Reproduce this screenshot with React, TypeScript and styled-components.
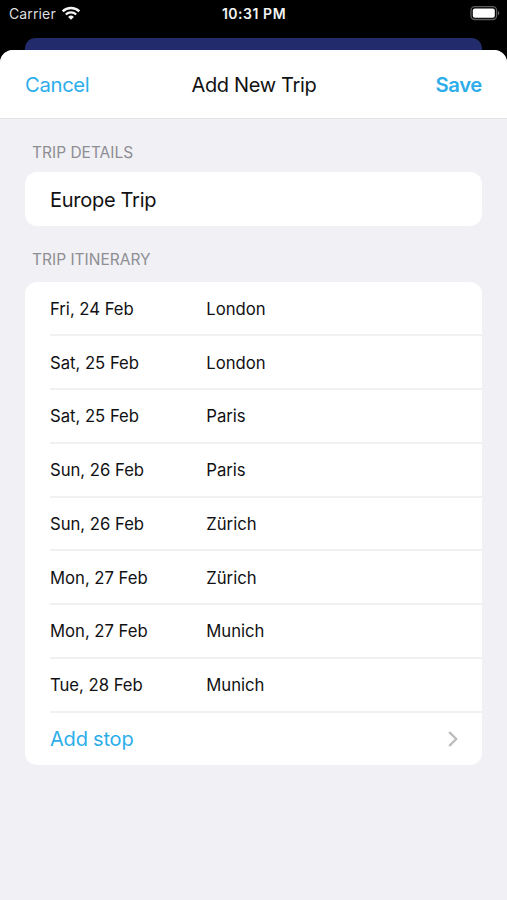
import React from "react";
import styled, { createGlobalStyle } from "styled-components";

const GlobalStyle = createGlobalStyle`
  *, *::before, *::after { box-sizing: border-box; }
  body { margin: 0; background: #000; }
`;

const Screen = styled.div`
  width: 507px;
  height: 900px;
  display: flex;
  flex-direction: column;
  overflow: hidden;
  background: #000;
  color: #111113;
  font-family: Inter, "Liberation Sans", sans-serif;
`;

const StatusBar = styled.header`
  height: 38px;
  flex: none;
  display: grid;
  grid-template-columns: 1fr auto 1fr;
  align-items: start;
  padding: 4px 6px 0 9px;
  color: #f4f4f4;
  font-size: 14px;
  line-height: 20px;
`;

const CarrierGroup = styled.div`
  display: flex;
  gap: 5px;
  letter-spacing: 0.13px;
  color: #dedede;
`;

const WifiIcon = styled.svg`
  width: 20px;
  height: 16px;
  margin-top: 1px;
`;

const Clock = styled.time`
  font-weight: 600;
  font-size: 14px;
  letter-spacing: 0.54px;
  margin-right: 2px;
`;

const BatteryIcon = styled.svg`
  justify-self: end;
  width: 32px;
  height: 16px;
  margin-top: 1px;
`;

const PreviousSheet = styled.div`
  height: 12px;
  flex: none;
  margin: 0 25px;
  background: #222c6c;
  border-radius: 10px 10px 0 0;
`;

const Sheet = styled.main`
  flex: 1;
  background: #f0f0f5;
  border-radius: 13px 13px 0 0;
  overflow: hidden;
`;

const NavBar = styled.nav`
  height: 69px;
  display: grid;
  grid-template-columns: 1fr auto 1fr;
  align-items: center;
  padding: 0 25px;
  background: #fff;
  border-bottom: 1px solid #e3e3e5;
`;

const Title = styled.h1`
  margin: 0 0 0 1px;
  padding-top: 2px;
  font-size: 20px;
  font-weight: 400;
  letter-spacing: -0.33px;
`;

const NavButton = styled.button<{ $primary?: boolean }>`
  justify-self: ${({ $primary }) => ($primary ? "end" : "start")};
  border: 0;
  padding: 0;
  background: none;
  font-family: inherit;
  font-size: 20.3px;
  font-weight: ${({ $primary }) => ($primary ? 600 : 400)};
  letter-spacing: -0.35px;
  color: #2daeea;
`;

const Content = styled.div`
  padding: 0 25px;
`;

const SectionTitle = styled.h2<{ $first?: boolean }>`
  margin: 0;
  height: ${({ $first }) => ($first ? 53 : 55.5)}px;
  padding: 24px 0 0 7px;
  font-size: 15.5px;
  line-height: 20px;
  font-weight: 400;
  letter-spacing: 0;
  color: #8e8e93;
`;

const Card = styled.section`
  background: #fff;
  border-radius: 12px;
  overflow: hidden;
`;

const NameField = styled.div`
  height: 54px;
  display: flex;
  align-items: center;
  padding: 1px 25px 0;
  font-size: 20px;
  letter-spacing: -0.28px;
`;

const StopRow = styled.div`
  height: 53.75px;
  margin-left: 25px;
  display: grid;
  grid-template-columns: 156.3px 1fr;
  align-items: center;
  padding-top: 1px;
  font-size: 16.7px;
  letter-spacing: -0.02px;
  box-shadow: inset 0 -1px 0 #f1f1f3, 0 1px 0 #f1f1f3;
`;

const AddStopButton = styled.button`
  width: 100%;
  height: 53.75px;
  display: flex;
  justify-content: space-between;
  align-items: center;
  border: 0;
  padding: 1px 24px 0 25px;
  background: none;
  font-family: inherit;
  font-size: 20px;
  letter-spacing: -0.2px;
  color: #2daeea;
`;

const Chevron = styled.svg`
  width: 10px;
  height: 16px;
`;

const stops = [
  { date: "Fri, 24 Feb", city: "London" },
  { date: "Sat, 25 Feb", city: "London" },
  { date: "Sat, 25 Feb", city: "Paris" },
  { date: "Sun, 26 Feb", city: "Paris" },
  { date: "Sun, 26 Feb", city: "Zürich" },
  { date: "Mon, 27 Feb", city: "Zürich" },
  { date: "Mon, 27 Feb", city: "Munich" },
  { date: "Tue, 28 Feb", city: "Munich" },
];

export default function App() {
  return (
    <>
      <GlobalStyle />
      <Screen>
        <StatusBar>
          <CarrierGroup>
            <span>Carrier</span>
            <WifiIcon viewBox="0 0 20 16" fill="none" stroke="#f5f5f5">
              <path d="M1.7 6.3a12 12 0 0 1 16.6 0" strokeWidth="2.5" />
              <path d="M4.8 9.5a7.5 7.5 0 0 1 10.4 0" strokeWidth="2.3" />
              <path d="M10 14.8 7.1 11.9a4.2 4.2 0 0 1 5.8 0Z" fill="#f5f5f5" stroke="none" />
            </WifiIcon>
          </CarrierGroup>
          <Clock>10:31 PM</Clock>
          <BatteryIcon viewBox="0 0 32 16">
            <rect x="2" y="1.7" width="25.6" height="12.8" rx="3.7" fill="none" stroke="#5d5d5d" strokeWidth="1.3" />
            <rect x="3.8" y="3.4" width="22" height="9.4" rx="2" fill="#fff" />
            <path d="M29 6v4.3c1.8-.7 1.8-3.6 0-4.3Z" fill="#666" />
          </BatteryIcon>
        </StatusBar>
        <PreviousSheet />
        <Sheet>
          <NavBar>
            <NavButton>Cancel</NavButton>
            <Title>Add New Trip</Title>
            <NavButton $primary>Save</NavButton>
          </NavBar>
          <Content>
            <SectionTitle $first>TRIP DETAILS</SectionTitle>
            <Card>
              <NameField>Europe Trip</NameField>
            </Card>
            <SectionTitle>TRIP ITINERARY</SectionTitle>
            <Card>
              {stops.map(({ date, city }) => (
                <StopRow key={`${date} ${city}`}>
                  <span>{date}</span>
                  <span>{city}</span>
                </StopRow>
              ))}
              <AddStopButton>
                Add stop
                <Chevron viewBox="0 0 10 16" fill="none" stroke="#bcbcbf" strokeWidth="2.3" strokeLinecap="round" strokeLinejoin="round">
                  <path d="m1.8 1.7 6.5 6.3-6.5 6.3" />
                </Chevron>
              </AddStopButton>
            </Card>
          </Content>
        </Sheet>
      </Screen>
    </>
  );
}
